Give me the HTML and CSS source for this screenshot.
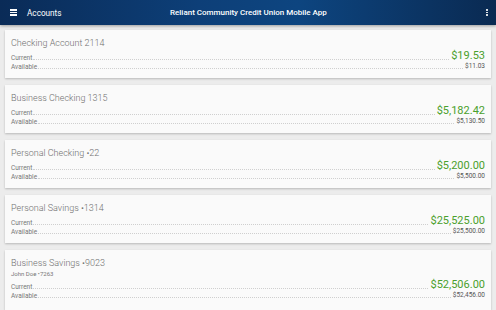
FILE: index.html
```html
<!DOCTYPE html>
<html lang="en">
<head>
    <meta charset="UTF-8">
    <title>Accounts</title>
    <link rel="stylesheet" href="styles.css">
</head>
<body>
<div class="topbar">
    <div class="menu">
        <span></span><span></span><span></span>
    </div>
    <div class="page_title">Accounts</div>
    <div class="app_title">Reliant Community Credit Union Mobile App</div>
    <div class="more">
        <span></span><span></span><span></span>
    </div>
</div>

<div class="list">
    <div class="card">
        <p class="name">Checking Account 2114</p>
        <div class="row current">
            <span class="label">Current</span><span class="dots"></span><span class="amount">$19.53</span>
        </div>
        <div class="row available">
            <span class="label">Available</span><span class="dots"></span><span class="amount">$11.03</span>
        </div>
    </div>
    <div class="card">
        <p class="name">Business Checking 1315</p>
        <div class="row current">
            <span class="label">Current</span><span class="dots"></span><span class="amount">$5,182.42</span>
        </div>
        <div class="row available">
            <span class="label">Available</span><span class="dots"></span><span class="amount">$5,130.50</span>
        </div>
    </div>
    <div class="card">
        <p class="name">Personal Checking •22</p>
        <div class="row current">
            <span class="label">Current</span><span class="dots"></span><span class="amount">$5,200.00</span>
        </div>
        <div class="row available">
            <span class="label">Available</span><span class="dots"></span><span class="amount">$5,500.00</span>
        </div>
    </div>
    <div class="card">
        <p class="name">Personal Savings •1314</p>
        <div class="row current">
            <span class="label">Current</span><span class="dots"></span><span class="amount">$25,525.00</span>
        </div>
        <div class="row available">
            <span class="label">Available</span><span class="dots"></span><span class="amount">$25,500.00</span>
        </div>
    </div>
    <div class="card tall">
        <p class="name">Business Savings •9023</p>
        <p class="owner">John Doe •7263</p>
        <div class="row current">
            <span class="label">Current</span><span class="dots"></span><span class="amount">$52,506.00</span>
        </div>
        <div class="row available">
            <span class="label">Available</span><span class="dots"></span><span class="amount">$52,456.00</span>
        </div>
    </div>
</div>
</body>
</html>
```

FILE: styles.css
```css
* {
    margin: 0;
    padding: 0;
    box-sizing: border-box;
}

html,
body {
    height: 100%;
    overflow: hidden;
}

body {
    background: #ececec;
    font-family: Roboto, "Liberation Sans", sans-serif;
}

.topbar {
    height: 25px;
    display: flex;
    align-items: center;
    padding: 0 8px 0 10px;
    color: #fff;
    background: linear-gradient(90deg, #0a2b57 0%, #0d3f78 40%, #0d4580 60%, #0a2a52 100%);
    box-shadow: 0 1px 3px rgba(0, 0, 0, 0.35);
    position: relative;
}

.menu {
    width: 7px;
    display: flex;
    flex-direction: column;
    gap: 1.3px;
}

.menu span {
    height: 1.3px;
    background: #fff;
}

.page_title {
    margin-left: 10px;
    font-size: 8.2px;
    width: 133px;
}

.app_title {
    flex: 1;
    font-size: 8px;
    font-weight: 500;
    padding-left: 10px;
}

.more {
    display: flex;
    flex-direction: column;
    gap: 1px;
    width: 2px;
}

.more span {
    width: 1.5px;
    height: 1.5px;
    background: #fff;
    border-radius: 50%;
}

.list {
    padding: 5px 5px 0 5px;
    display: flex;
    flex-direction: column;
    gap: 7px;
}

.card {
    height: 48px;
    background: #fafafa;
    box-shadow: 0 1px 2px rgba(0, 0, 0, 0.22);
    padding: 7px 6px 0 6px;
}

.card.tall {
    height: 60px;
}

.name {
    font-size: 9px;
    font-weight: 300;
    color: #707070;
    line-height: 12px;
}

.owner {
    font-size: 6px;
    color: #777;
    line-height: 9px;
}

.row {
    display: flex;
    align-items: flex-end;
}

.current {
    margin-top: 1px;
}

.label {
    font-size: 6.5px;
    color: #777;
    line-height: 8px;
}

.dots {
    flex: 1;
    border-bottom: 1px dotted #cfcfcf;
    margin: 0 2px 2px 1px;
}

.current .amount {
    font-size: 11px;
    color: #4aa02c;
    line-height: 12px;
}

.available .amount {
    font-size: 6.5px;
    color: #555;
    line-height: 9px;
}
```
